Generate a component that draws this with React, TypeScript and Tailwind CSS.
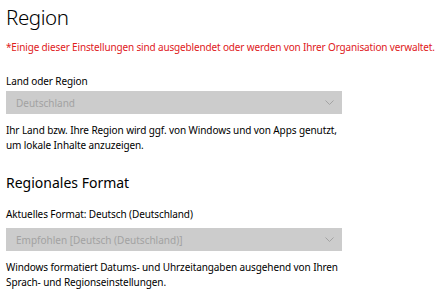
const Chevron = () => (
  <svg width="9" height="5" viewBox="0 0 9 5" fill="none" className="shrink-0">
    <path d="M0.5 0.5 L4.5 4.5 L8.5 0.5" stroke="#a3a3a3" strokeWidth="1" />
  </svg>
)

const Select = ({ value }: { value: string }) => (
  <div className="flex h-[23px] w-[336px] items-center justify-between bg-[#cccccc] pl-[10px] pr-[8px]">
    <span className="text-[10px] leading-[14px] text-[#a2a2a2]">{value}</span>
    <Chevron />
  </div>
)

export default function App() {
  return (
    <div
      className="h-[291px] w-[440px] overflow-hidden bg-white pl-[6px] text-black"
      style={{ fontFamily: '"Noto Sans", "Open Sans", sans-serif' }}
    >
      <h1 className="pt-[3px] text-[20.5px] font-light leading-[28px] tracking-[-0.4px]">Region</h1>
      <p className="mt-[9px] whitespace-nowrap text-[10px] leading-[14px] tracking-[-0.15px] text-[#e0201b]">
        *Einige dieser Einstellungen sind ausgeblendet oder werden von Ihrer Organisation verwaltet.
      </p>

      <p className="mt-[20px] text-[10px] leading-[14px] tracking-[-0.1px]">Land oder Region</p>
      <div className="mt-[3px]">
        <Select value="Deutschland" />
      </div>
      <p className="mt-[9px] text-[10px] leading-[15px] tracking-[-0.1px]">
        Ihr Land bzw. Ihre Region wird ggf. von Windows und von Apps genutzt,
        <br />
        um lokale Inhalte anzuzeigen.
      </p>

      <h2 className="mt-[20px] text-[14px] leading-[20px]">Regionales Format</h2>
      <p className="mt-[14px] text-[10px] leading-[14px] tracking-[-0.1px]">Aktuelles Format: Deutsch (Deutschland)</p>
      <div className="mt-[7px]">
        <Select value="Empfohlen [Deutsch (Deutschland)]" />
      </div>
      <p className="mt-[9px] text-[10px] leading-[14.5px] tracking-[-0.1px]">
        Windows formatiert Datums- und Uhrzeitangaben ausgehend von Ihren
        <br />
        Sprach- und Regionseinstellungen.
      </p>
    </div>
  )
}
